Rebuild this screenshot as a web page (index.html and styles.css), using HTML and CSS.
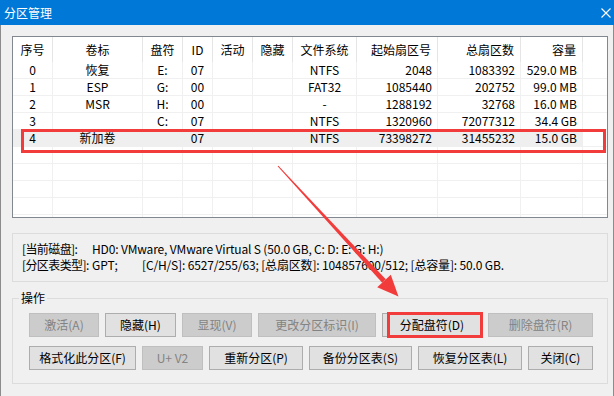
FILE: index.html
```html
<!doctype html>
<html>
<head>
    <meta charset="utf-8">
    <title>分区管理</title>
    <link rel="stylesheet" href="styles.css">
</head>

<body>
<div class="window">
    <div class="titlebar">
        <span class="title">分区管理</span>
        <svg class="close" width="10" height="10" viewBox="0 0 10 10">
            <path d="M0.5 0.5 L9.5 9.5 M9.5 0.5 L0.5 9.5" stroke="#fff" stroke-width="1.1" fill="none"/>
        </svg>
    </div>
    <div class="body">
        <!--分区列表-->
        <div class="list">
            <div class="row head">
                <div class="c">序号</div>
                <div class="c">卷标</div>
                <div class="c">盘符</div>
                <div class="c">ID</div>
                <div class="c">活动</div>
                <div class="c">隐藏</div>
                <div class="c">文件系统</div>
                <div class="c r">起始扇区号</div>
                <div class="c r">总扇区数</div>
                <div class="c r">容量</div>
                <div class="c fill"></div>
            </div>
            <div class="row">
                <div class="c">0</div><div class="c">恢复</div><div class="c">E:</div><div class="c">07</div>
                <div class="c"></div><div class="c"></div><div class="c">NTFS</div>
                <div class="c r">2048</div><div class="c r">1083392</div><div class="c r">529.0 MB</div><div class="c fill"></div>
            </div>
            <div class="row">
                <div class="c">1</div><div class="c">ESP</div><div class="c">G:</div><div class="c">00</div>
                <div class="c"></div><div class="c"></div><div class="c">FAT32</div>
                <div class="c r">1085440</div><div class="c r">202752</div><div class="c r">99.0 MB</div><div class="c fill"></div>
            </div>
            <div class="row">
                <div class="c">2</div><div class="c">MSR</div><div class="c">H:</div><div class="c">00</div>
                <div class="c"></div><div class="c"></div><div class="c">-</div>
                <div class="c r">1288192</div><div class="c r">32768</div><div class="c r">16.0 MB</div><div class="c fill"></div>
            </div>
            <div class="row">
                <div class="c">3</div><div class="c"></div><div class="c">C:</div><div class="c">07</div>
                <div class="c"></div><div class="c"></div><div class="c">NTFS</div>
                <div class="c r">1320960</div><div class="c r">72077312</div><div class="c r">34.4 GB</div><div class="c fill"></div>
            </div>
            <div class="row on">
                <div class="c">4</div><div class="c">新加卷</div><div class="c"></div><div class="c">07</div>
                <div class="c"></div><div class="c"></div><div class="c">NTFS</div>
                <div class="c r">73398272</div><div class="c r">31455232</div><div class="c r">15.0 GB</div><div class="c fill"></div>
            </div>
            <div class="row"><div class="c"></div><div class="c"></div><div class="c"></div><div class="c"></div><div class="c"></div><div class="c"></div><div class="c"></div><div class="c"></div><div class="c"></div><div class="c"></div><div class="c fill"></div></div>
            <div class="row"><div class="c"></div><div class="c"></div><div class="c"></div><div class="c"></div><div class="c"></div><div class="c"></div><div class="c"></div><div class="c"></div><div class="c"></div><div class="c"></div><div class="c fill"></div></div>
            <div class="row"><div class="c"></div><div class="c"></div><div class="c"></div><div class="c"></div><div class="c"></div><div class="c"></div><div class="c"></div><div class="c"></div><div class="c"></div><div class="c"></div><div class="c fill"></div></div>
            <div class="row"><div class="c"></div><div class="c"></div><div class="c"></div><div class="c"></div><div class="c"></div><div class="c"></div><div class="c"></div><div class="c"></div><div class="c"></div><div class="c"></div><div class="c fill"></div></div>
            <div class="row"><div class="c"></div><div class="c"></div><div class="c"></div><div class="c"></div><div class="c"></div><div class="c"></div><div class="c"></div><div class="c"></div><div class="c"></div><div class="c"></div><div class="c fill"></div></div>
            <!--标注框-->
            <div class="mark mark_row"></div>
        </div>

        <!--磁盘信息-->
        <div class="info">
            <div class="info_line">
                <span class="lbl">[当前磁盘]:</span>
                <span class="val">HD0: VMware, VMware Virtual S (50.0 GB, C: D: E: G: H:)</span>
            </div>
            <div class="info_line">
                <span class="lbl">[分区表类型]:</span>
                <span class="gpt">GPT;</span>
                <span class="val">[C/H/S]: 6527/255/63; [总扇区数]: 104857600/512; [总容量]: 50.0 GB.</span>
            </div>
        </div>

        <!--操作-->
        <fieldset class="ops">
            <legend>操作</legend>
            <div class="btn_row">
                <a href="javascript:;" class="btn off w70">激活(A)</a>
                <a href="javascript:;" class="btn w71">隐藏(H)</a>
                <a href="javascript:;" class="btn off w70">显现(V)</a>
                <a href="javascript:;" class="btn off w118">更改分区标识(I)</a>
                <a href="javascript:;" class="btn w100">分配盘符(D)<span class="mark mark_btn"></span></a>
                <a href="javascript:;" class="btn off w105">删除盘符(R)</a>
            </div>
            <div class="btn_row">
                <a href="javascript:;" class="btn w107">格式化此分区(F)</a>
                <a href="javascript:;" class="btn off w61">U+ V2</a>
                <a href="javascript:;" class="btn w94">重新分区(P)</a>
                <a href="javascript:;" class="btn w103">备份分区表(S)</a>
                <a href="javascript:;" class="btn w104">恢复分区表(L)</a>
                <a href="javascript:;" class="btn w65">关闭(C)</a>
            </div>
        </fieldset>
    </div>

    <!--红色箭头-->
    <svg class="arrow" width="614" height="396" viewBox="0 0 614 396">
        <polygon fill="#f23c3c" points="278.4,165.7 277.6,166.3 382.2,282.7 385.8,279.3"/>
        <polygon fill="#f23c3c" points="398.5,296.5 377.2,287.3 390.8,274.7"/>
    </svg>
</div>
</body>

</html>
```

FILE: styles.css
```css
body {
    margin: 0;
    padding: 0;
    font-family: "Noto Sans CJK SC", sans-serif;
    font-size: 12px;
    color: #000;
}

.window {
    width: 614px;
    height: 396px;
    position: relative;
    overflow: hidden;
    background-color: #f0f0f0;
}

.titlebar {
    height: 25px;
    background-color: #0078d7;
    color: #fff;
    display: flex;
    align-items: center;
    justify-content: space-between;
    padding: 0 3px 0 4px;
}

.title {
    line-height: 25px;
}

.body {
    height: 371px;
    border-left: 1px solid #8c8c8c;
    border-right: 1px solid #8c8c8c;
    padding: 11px 0 0 11px;
    box-sizing: border-box;
}

/*列表*/
.list {
    width: 596px;
    height: 182px;
    box-sizing: border-box;
    border: 1px solid #828790;
    background-color: #fff;
    position: relative;
    overflow: hidden;
}

.row {
    display: grid;
    grid-template-columns: 40px 90px 40px 30px 40px 40px 64px 81px 83px 62px 1fr;
    height: 17px;
}

.row .c {
    box-sizing: border-box;
    border-right: 1px solid #f0f0f0;
    border-bottom: 1px solid #f0f0f0;
    line-height: 16px;
    text-align: center;
    white-space: nowrap;
    overflow: hidden;
}

.row .r {
    text-align: right;
    padding-right: 5px;
}

.row .fill {
    border-right: 0;
}

.row.head {
    height: 25px;
}

.row.head .c {
    border-bottom: 0;
    border-right-color: #e5e5e5;
    line-height: 25px;
}

.row.head .r {
    padding-right: 6px;
}

.row.head .fill {
    border-right: 0;
}

.row.on .c {
    background-color: #efefef;
    border-color: #efefef;
}

.row.on .fill {
    background-color: #fff;
    border-bottom-color: #f0f0f0;
}

/*红色标注*/
.mark {
    position: absolute;
    border: 3px solid #f23c3c;
    box-sizing: border-box;
}

.mark_row {
    left: 8px;
    top: 92px;
    width: 585px;
    height: 24px;
}

.mark_btn {
    left: 4px;
    top: -2px;
    width: 96px;
    height: 26px;
}

/*磁盘信息*/
.info {
    width: 596px;
    height: 49px;
    box-sizing: border-box;
    margin-top: 15px;
    border: 1px solid #dcdcdc;
    padding: 7px 0 0 9px;
}

.info_line {
    display: flex;
    line-height: 16px;
    white-space: nowrap;
}

.info_line .lbl {
    flex-shrink: 0;
    width: 70px;
    letter-spacing: -0.6px;
}

.info_line .gpt {
    flex-shrink: 0;
    width: 50px;
}

.info_line .val {
    letter-spacing: -0.15px;
}

/*操作*/
.ops {
    width: 596px;
    box-sizing: border-box;
    margin: 8px 0 0 0;
    padding: 7px 0 13px 6px;
    border: 1px solid #dcdcdc;
    min-inline-size: 0;
}

.ops legend {
    padding: 0 2px;
    line-height: 16px;
}

.btn_row {
    display: flex;
    gap: 6px;
    margin-left: 10px;
}

.btn_row + .btn_row {
    margin-top: 9px;
}

.btn {
    display: block;
    position: relative;
    height: 24px;
    box-sizing: border-box;
    border: 1px solid #adadad;
    background-color: #e1e1e1;
    color: #000;
    text-decoration: none;
    text-align: center;
    line-height: 22px;
    white-space: nowrap;
}

.btn.off {
    border-color: #bfbfbf;
    background-color: #cccccc;
    color: #838383;
}

.w61 { width: 61px; }
.w65 { width: 65px; }
.w70 { width: 70px; }
.w71 { width: 71px; }
.w94 { width: 94px; }
.w100 { width: 100px; }
.w103 { width: 103px; }
.w104 { width: 104px; }
.w105 { width: 105px; }
.w107 { width: 107px; }
.w118 { width: 118px; }

.arrow {
    position: absolute;
    left: 0;
    top: 0;
    pointer-events: none;
}
```
